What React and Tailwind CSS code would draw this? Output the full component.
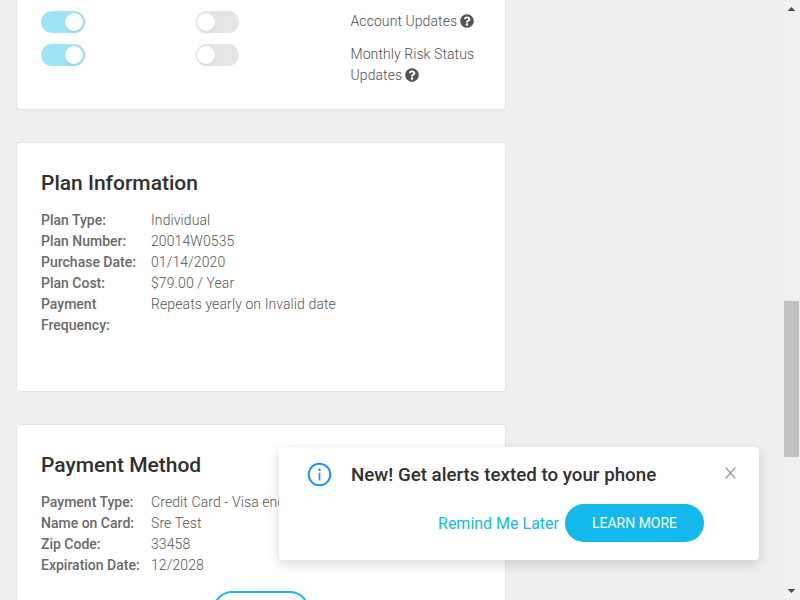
import React from "react";
import { FaQuestionCircle } from "react-icons/fa";
import { AiOutlineInfoCircle } from "react-icons/ai";

function Toggle({ on }) {
  return (
    <span
      className={
        "flex h-[22px] items-center rounded-full " +
        (on ? "w-[44px] justify-end bg-[#9fe3f7] px-[2px]" : "w-[43px] justify-start bg-[#e5e5e5] pl-px")
      }
    >
      <span className="size-[18px] rounded-full bg-white shadow-[0_2px_4px_0_rgba(0,35,11,0.08)]" />
    </span>
  );
}

function AlertRow({ children }) {
  return (
    <div className="grid grid-cols-[155px_154.500px_1fr] items-start">
      <Toggle on />
      <Toggle />
      <div className="tracking-[0.080px] text-[#505050]">
        {children}
        <FaQuestionCircle className="ml-[3px] inline size-[14px] align-[-2px] text-[#555]" />
      </div>
    </div>
  );
}

function Card({ className, children }) {
  return (
    <section className={"w-[490px] shrink-0 rounded-[4px] border border-[#e6e6e6] bg-white px-6 " + className}>
      {children}
    </section>
  );
}

function Details({ title, rows }) {
  return (
    <>
      <h2 className="mb-3 text-[21px] leading-[30px] font-medium tracking-normal text-[#303030]">{title}</h2>
      <dl>
        {rows.map(([label, value]) => (
          <div key={label} className="grid grid-cols-[110px_1fr]">
            <dt className="pr-2 font-medium tracking-normal text-[#6a6a6a]">{label}</dt>
            <dd className="whitespace-nowrap text-[#555]">{value}</dd>
          </div>
        ))}
      </dl>
    </>
  );
}

const plan = [
  ["Plan Type:", "Individual"],
  ["Plan Number:", "20014W0535"],
  ["Purchase Date:", "01/14/2020"],
  ["Plan Cost:", "$79.00 / Year"],
  ["Payment Frequency:", "Repeats yearly on Invalid date"],
];

const payment = [
  ["Payment Type:", "Credit Card - Visa ending in 1111"],
  ["Name on Card:", "Sre Test"],
  ["Zip Code:", "33458"],
  ["Expiration Date:", "12/2028"],
];

export default function App() {
  return (
    <div className="relative flex h-[600px] w-[800px] overflow-hidden bg-[#efefef] font-['Roboto',sans-serif] text-[14px] leading-[21px] font-light tracking-[0.1px]">
      <main className="flex h-full w-[783px] flex-col gap-8 overflow-hidden pl-4">
        <Card className="flex h-[110px] flex-col gap-[11px] rounded-t-none border-t-0 pt-[11px]">
          <div className="h-[22px]">
            <AlertRow>Account Updates</AlertRow>
          </div>
          <AlertRow>Monthly Risk Status Updates</AlertRow>
        </Card>
        <Card className="h-[250px] pt-[25px]">
          <Details title="Plan Information" rows={plan} />
        </Card>
        <Card className="h-[250px] pt-[25px]">
          <Details title="Payment Method" rows={payment} />
          <button className="mx-auto mt-[15px] block h-[38px] w-[96px] rounded-full border-2 border-[#13b9ea]" />
        </Card>
      </main>

      <div className="flex h-full w-[17px] flex-col items-center bg-[#f0f0f0]">
        <svg className="h-[17px] w-[17px] shrink-0" viewBox="0 0 17 17">
          <path d="M4.500 11h8L8.500 7z" fill="#505050" />
        </svg>
        <div className="mt-[284px] mr-px h-[156px] w-[15px] bg-[#c1c1c1]" />
        <svg className="mt-auto h-[17px] w-[17px] shrink-0" viewBox="0 0 17 17">
          <path d="M4.500 6h8L8.500 10z" fill="#505050" />
        </svg>
      </div>

      <aside className="absolute top-[447px] left-[279px] flex h-[113px] w-[480px] rounded-[4px] bg-white shadow-[0_4px_12px_rgba(0,0,0,0.15)]">
        <AiOutlineInfoCircle className="mt-[14px] ml-[26.500px] size-[27px] shrink-0 text-[#1890ff]" />
        <div className="ml-[18.500px] w-[353px] pt-4">
          <h3 className="text-[18.750px] leading-6 font-medium tracking-normal whitespace-nowrap text-[#303030]">
            New! Get alerts texted to your phone
          </h3>
          <div className="mt-[17px] flex items-center justify-end gap-[6px]">
            <a className="text-[16px] font-normal tracking-normal text-[#13b9ea]">Remind Me Later</a>
            <button className="h-[38px] w-[139px] rounded-full bg-[#13b9ea] pt-px text-[14px] font-normal tracking-normal text-white">
              LEARN MORE
            </button>
          </div>
        </div>
        <svg className="mt-5 ml-[20.500px] h-3 w-[11px]" viewBox="0 0 11 12">
          <path d="M.7.500 10.300 11.500M10.300.500.700 11.500" stroke="#999" strokeWidth="1.200" fill="none" />
        </svg>
      </aside>
    </div>
  );
}
